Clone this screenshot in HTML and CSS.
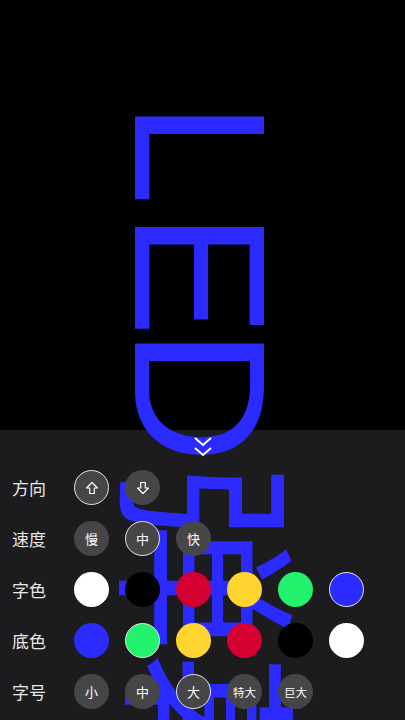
FILE: index.html
```html
<!DOCTYPE html>
<html lang="zh-CN">

<head>
    <meta charset="UTF-8">
    <meta name="viewport" content="width=device-width, initial-scale=1.0">
    <title>LED弹幕</title>
    <link rel="stylesheet" href="styles.css">
</head>

<body>
    <div class="screen">
        <div class="stage"></div>
        <!-- 竖着显示的弹幕文字 -->
        <div class="led-text"><span class="ch-l">L</span><span class="ch-e">E</span>D弹幕</div>
        <div class="panel">
            <div class="toggle">
                <svg width="20" height="24" viewBox="0 0 20 24">
                    <polyline points="2,2 10,9 18,2" fill="none" stroke="#fff" stroke-width="2" />
                    <polyline points="2,12 10,19 18,12" fill="none" stroke="#fff" stroke-width="2" />
                </svg>
            </div>
            <div class="rows">
                <div class="row">
                    <span class="label">方向</span>
                    <div class="opts">
                        <span class="btn active">
                            <svg width="14" height="14" viewBox="0 0 14 14">
                                <polygon points="7,1.5 12.5,7 9.3,7 9.3,12.5 4.7,12.5 4.7,7 1.5,7" fill="none" stroke="#fff" stroke-width="1.2" stroke-linejoin="round" />
                            </svg>
                        </span>
                        <span class="btn">
                            <svg width="14" height="14" viewBox="0 0 14 14">
                                <polygon points="7,12.5 12.5,7 9.3,7 9.3,1.5 4.7,1.5 4.7,7 1.5,7" fill="none" stroke="#fff" stroke-width="1.2" stroke-linejoin="round" />
                            </svg>
                        </span>
                    </div>
                </div>
                <div class="row">
                    <span class="label">速度</span>
                    <div class="opts">
                        <span class="btn">慢</span>
                        <span class="btn active">中</span>
                        <span class="btn">快</span>
                    </div>
                </div>
                <div class="row">
                    <span class="label">字色</span>
                    <div class="opts">
                        <span class="dot white"></span>
                        <span class="dot black"></span>
                        <span class="dot red"></span>
                        <span class="dot yellow"></span>
                        <span class="dot green"></span>
                        <span class="dot blue active"></span>
                    </div>
                </div>
                <div class="row">
                    <span class="label">底色</span>
                    <div class="opts">
                        <span class="dot blue"></span>
                        <span class="dot green active"></span>
                        <span class="dot yellow"></span>
                        <span class="dot red"></span>
                        <span class="dot black"></span>
                        <span class="dot white"></span>
                    </div>
                </div>
                <div class="row">
                    <span class="label">字号</span>
                    <div class="opts">
                        <span class="btn">小</span>
                        <span class="btn">中</span>
                        <span class="btn active">大</span>
                        <span class="btn two">特大</span>
                        <span class="btn two">巨大</span>
                    </div>
                </div>
            </div>
        </div>
    </div>
</body>

</html>
```

FILE: styles.css
```css
body {
    margin: 0;
    background: #000;
    font-family: "Noto Sans CJK SC", "Noto Sans", sans-serif;
}

.screen {
    position: relative;
    width: 405px;
    height: 720px;
    overflow: hidden;
    background: #000;
}

.stage {
    height: 430px;
}

.led-text {
    position: absolute;
    left: 106px;
    top: 101px;
    z-index: 1;
    writing-mode: vertical-rl;
    text-orientation: sideways;
    font-family: "Liberation Sans", "Noto Sans CJK SC", sans-serif;
    font-size: 188px;
    line-height: 1;
    color: #2b2bff;
    white-space: nowrap;
}

.ch-l {
    letter-spacing: 6px;
}

.ch-e {
    letter-spacing: -9px;
}

.panel {
    height: 290px;
    background: #1c1c1e;
}

.toggle {
    position: relative;
    z-index: 2;
    height: 40px;
    display: flex;
    justify-content: center;
    padding-top: 6px;
    box-sizing: border-box;
}

.rows {
    position: relative;
    z-index: 2;
    display: flex;
    flex-direction: column;
    gap: 16px;
}

.row {
    display: flex;
    align-items: center;
    height: 35px;
    padding-left: 12px;
}

.label {
    width: 62px;
    font-size: 17px;
    color: #e8e8e8;
}

.opts {
    display: flex;
    gap: 16px;
}

.btn,
.dot {
    width: 35px;
    height: 35px;
    border-radius: 50%;
    box-sizing: border-box;
}

.btn {
    display: flex;
    align-items: center;
    justify-content: center;
    background: #464648;
    color: #fff;
    font-size: 13px;
}

.btn.two {
    font-size: 11.5px;
}

.active {
    border: 1.5px solid #e6e6e6;
}

.white {
    background: #fff;
}

.black {
    background: #000;
}

.red {
    background: #d40032;
}

.yellow {
    background: #ffd42e;
}

.green {
    background: #22f26c;
}

.blue {
    background: #2b2bff;
}
```
